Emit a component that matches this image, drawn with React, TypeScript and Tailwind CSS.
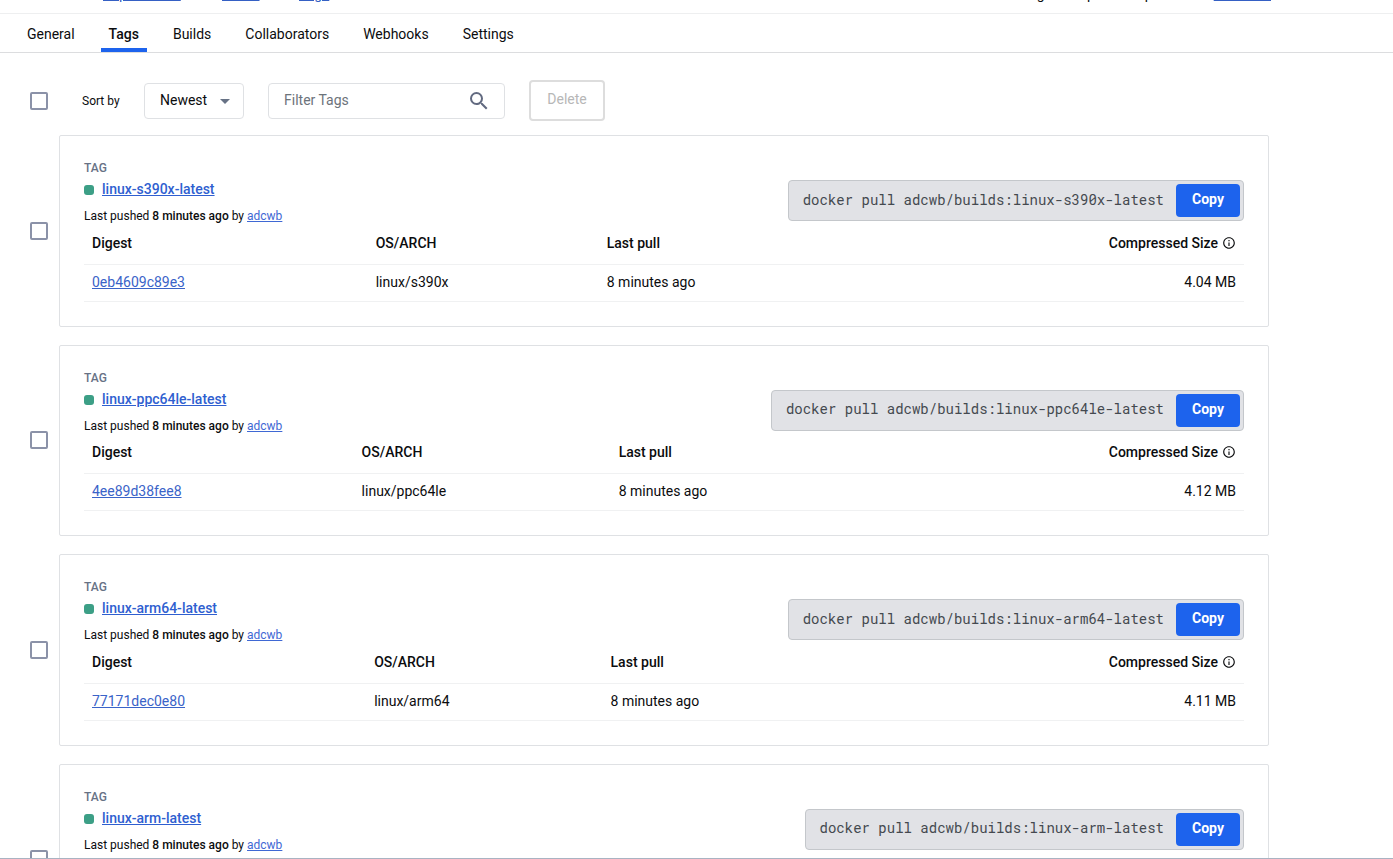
import { MdArrowDropDown, MdOutlineInfo, MdSearch } from "react-icons/md";

type Tag = { name: string; digest: string; arch: string; size: string };

const tabs = ["General", "Tags", "Builds", "Collaborators", "Webhooks", "Settings"];

const tags: Tag[] = [
  { name: "linux-s390x-latest", digest: "0eb4609c89e3", arch: "linux/s390x", size: "4.04 MB" },
  { name: "linux-ppc64le-latest", digest: "4ee89d38fee8", arch: "linux/ppc64le", size: "4.12 MB" },
  { name: "linux-arm64-latest", digest: "77171dec0e80", arch: "linux/arm64", size: "4.11 MB" },
  { name: "linux-arm-latest", digest: "f1c2d9a07b35", arch: "linux/arm", size: "3.89 MB" },
];

function Checkbox({ label }: { label: string }) {
  return (
    <input
      type="checkbox"
      aria-label={label}
      className="size-[18px] shrink-0 appearance-none rounded-xs border-2 border-[#8b92a8] bg-white checked:bg-[#1d63ed]"
    />
  );
}

function TopBar() {
  return (
    <div className="flex h-[14px] shrink-0 items-end justify-between overflow-hidden border-b border-[#eeeff0] pr-[122px] pb-[9px] pl-[35px] text-[14px] leading-5">
      <nav aria-label="Breadcrumb" className="flex">
        <span className="w-[68px]">adcwb</span>
        <a href="#repositories" className="w-[119px] text-[#3560c4] underline">Repositories</a>
        <a href="#builds" className="w-[77px] text-[#3560c4] underline">builds</a>
        <a href="#tags" className="text-[#3560c4] underline">Tags</a>
      </nav>
      <p>
        Using 0 of 1 private repositories.{" "}
        <a href="#plans" className="text-[#3560c4] underline">Get more</a>
      </p>
    </div>
  );
}

function Tabs() {
  return (
    <nav aria-label="Repository" className="flex h-[39px] shrink-0 gap-[18px] border-b border-[#dcdddf] pl-[19px]">
      {tabs.map((tab) => (
        <a
          key={tab}
          href={"#" + tab.toLowerCase()}
          className={
            tab === "Tags"
              ? "border-b-4 border-[#1d63ed] px-2 pt-[10px] text-[14px] leading-5 font-medium"
              : "border-b-4 border-transparent px-2 pt-[10px] text-[14px] leading-5"
          }
        >
          {tab}
        </a>
      ))}
    </nav>
  );
}

function Toolbar() {
  return (
    <div className="flex h-[41px] items-center">
      <Checkbox label="Select all tags" />
      <label htmlFor="sort" className="ml-[34px] w-[62px] text-[12px]">Sort by</label>
      <div className="relative h-9 w-[100px]">
        <select id="sort" className="h-full w-full appearance-none rounded-[4px] border border-[#dfe1e4] bg-white pl-[15px] text-[14px]">
          <option>Newest</option>
          <option>Oldest</option>
        </select>
        <MdArrowDropDown className="pointer-events-none absolute top-[6px] right-[7px] size-6 text-[#677285]" />
      </div>
      <div className="ml-6 flex h-9 w-[237px] items-center rounded-[4px] border border-[#dfe1e4] pr-[13px] pl-[15px]">
        <input
          type="text"
          aria-label="Filter Tags"
          placeholder="Filter Tags"
          className="min-w-0 flex-1 text-[14px] outline-none placeholder:text-[#6c737b]"
        />
        <MdSearch className="size-6 text-[#626a80]" />
      </div>
      <button type="button" disabled className="ml-6 h-[41px] w-[76px] rounded-[4px] border-2 border-[#dddddd] pb-[3px] text-[14px] text-[#b7b7b7]">
        Delete
      </button>
    </div>
  );
}

function TagCard({ tag }: { tag: Tag }) {
  return (
    <li className="flex items-center gap-[11px]">
      <Checkbox label={"Select " + tag.name} />
      <article className="min-w-0 flex-1 rounded-xs border border-[#dfe1e4] p-6">
        <div className="flex items-start justify-between">
          <div>
            <div className="text-[12px] leading-4 font-medium text-[#677285]">TAG</div>
            <div className="mt-[3px] flex items-center gap-2">
              <span className="mt-[2px] size-[10px] rounded-[3px] bg-[#3c9f86]" />
              <a href={"#" + tag.name} className="text-[14px] leading-5 font-medium text-[#2f5fd0] underline">{tag.name}</a>
            </div>
            <p className="mt-[9px] text-[12px] leading-4">
              Last pushed <span className="font-medium">8 minutes ago</span> by{" "}
              <a href="#adcwb" className="text-[#3f68d4] underline">adcwb</a>
            </p>
          </div>
          <div className="mt-5 flex h-[41px] items-center gap-3 rounded-[4px] border border-[#c4c7cb] bg-[#e1e2e6] pr-[3px] pl-[14px]">
            <code className="pb-[3px] font-['Roboto_Mono','Liberation_Mono',monospace] text-[14px] text-[#44494f]">
              docker pull adcwb/builds:{tag.name}
            </code>
            <button type="button" className="h-[33px] w-16 rounded-[4px] bg-[#1d63ed] pb-[2px] text-[14px] font-bold text-white">
              Copy
            </button>
          </div>
        </div>
        <table className="w-full text-left text-[14px] leading-5">
          <thead>
            <tr className="h-[40px] border-b border-[#f0f1f2]">
              <th className="px-2 pb-[2px] font-medium">Digest</th>
              <th className="px-2 pb-[2px] font-medium">OS/ARCH</th>
              <th className="px-2 pb-[2px] font-medium">Last pull</th>
              <th className="px-2 pb-[2px] font-medium">
                <span className="flex items-center justify-end gap-1">
                  Compressed Size <MdOutlineInfo className="size-[14px]" />
                </span>
              </th>
            </tr>
          </thead>
          <tbody>
            <tr className="h-[37px] border-b border-[#f0f1f2]">
              <td className="px-2 pb-[2px]">
                <a href={"#" + tag.digest} className="text-[#3a63c8] underline">{tag.digest}</a>
              </td>
              <td className="px-2 pb-[2px]">{tag.arch}</td>
              <td className="px-2 pb-[2px]">8 minutes ago</td>
              <td className="px-2 pb-[2px] text-right">{tag.size}</td>
            </tr>
          </tbody>
        </table>
      </article>
    </li>
  );
}

export default function App() {
  return (
    <div className="flex h-screen flex-col border-b border-[#a9b3c2] bg-white font-[Roboto,sans-serif] text-[#0b0c0e]">
      <TopBar />
      <Tabs />
      <main className="min-h-0 flex-1 overflow-y-auto [scrollbar-width:none]">
        <div className="max-w-[1269px] pt-[27px] pl-[30px]">
          <Toolbar />
          <ul className="mt-[14px] flex flex-col gap-[18px]">
            {tags.map((tag) => (
              <TagCard key={tag.name} tag={tag} />
            ))}
          </ul>
        </div>
      </main>
    </div>
  );
}
